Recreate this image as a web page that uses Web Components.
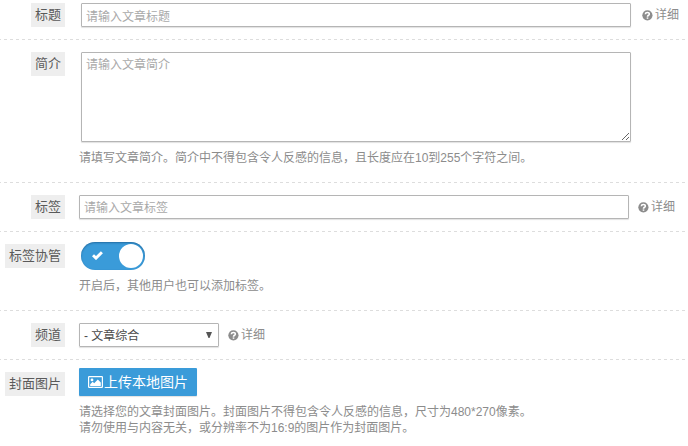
<!DOCTYPE html>
<html lang="zh-CN">
<head>
<meta charset="utf-8">
<title>发布文章</title>
<style>
    html, body{
        margin: 0;
        height: 446px;
        overflow: hidden;
        background: #fff;
    }
    body{
        font: 12px/16px "Liberation Sans", "Noto Sans CJK SC", sans-serif;
        color: #666;
    }
</style>
</head>
<body>
<article-form>
    <form-row label="标题" class="first">
        <text-field class="inset" hint="请输入文章标题"></text-field>
        <help-link class="wide">详细</help-link>
    </form-row>
    <form-row label="简介" style="--row-height: 143px">
        <text-field class="inset" multiline hint="请输入文章简介"></text-field>
        <p slot="note">请填写文章简介。简介中不得包含令人反感的信息，且长度应在10到255个字符之间。</p>
    </form-row>
    <form-row label="标签">
        <text-field hint="请输入文章标签"></text-field>
        <help-link>详细</help-link>
    </form-row>
    <form-row label="标签协管" style="--row-height: 79px; --row-top: 10px">
        <toggle-switch></toggle-switch>
        <p slot="note">开启后，其他用户也可以添加标签。</p>
    </form-row>
    <form-row label="频道">
        <select-box>- 文章综合</select-box>
        <help-link>详细</help-link>
    </form-row>
    <form-row label="封面图片" class="last" style="--row-height: 86px; --row-top: 8px">
        <upload-button>上传本地图片</upload-button>
        <p slot="note">请选择您的文章封面图片。封面图片不得包含令人反感的信息，尺寸为480*270像素。<br>请勿使用与内容无关，或分辨率不为16:9的图片作为封面图片。</p>
    </form-row>
</article-form>

<script>
class ArticleForm extends HTMLElement{
    constructor(){
        super();
        this.attachShadow({mode : 'open'});
        this.shadowRoot.innerHTML = `
            <style>
                :host{
                    display: flex;
                    flex-direction: column;
                    width: 685px;
                }
            </style>
            <slot></slot>
        `;
    }
}

const formRow = document.createElement('template');
formRow.innerHTML = `
    <style>
        :host{
            display: flex;
            align-items: flex-start;
            box-sizing: border-box;
            height: var(--row-height, 49px);
            padding-top: 12px;
            background: repeating-linear-gradient(90deg, #ddd 0 3px, transparent 3px 6px) -2px 100% / 690px 1px no-repeat;
        }
        :host(.first){
            height: 40px;
            padding-top: 3px;
        }
        :host(.last){
            background: none;
        }
        .label{
            display: flex;
            justify-content: flex-end;
            width: 65px;
            margin-right: 14px;
        }
        .label span{
            padding: 0 4px;
            background: #eee;
            color: #5a5a5a;
            font-size: 13px;
            line-height: 24px;
            white-space: nowrap;
        }
        .content{
            flex: 1;
            margin-top: calc(var(--row-top, 12px) - 12px);
        }
        .controls{
            display: flex;
            align-items: center;
        }
        ::slotted(p){
            margin: 8px 0 0;
            color: #8c8c8c;
            white-space: nowrap;
        }
    </style>
    <div class="label"><span></span></div>
    <div class="content">
        <div class="controls"><slot></slot></div>
        <slot name="note"></slot>
    </div>
`;

class FormRow extends HTMLElement{
    constructor(){
        super();
        this.attachShadow({mode : 'open'});
        this.shadowRoot.appendChild(formRow.content.cloneNode(true));
    }
    connectedCallback(){
        this.shadowRoot.querySelector('.label span').textContent = this.getAttribute('label');
    }
}

class TextField extends HTMLElement{
    constructor(){
        super();
        this.attachShadow({mode : 'open'});
    }
    connectedCallback(){
        const hint = this.getAttribute('hint');
        const field = this.hasAttribute('multiline')
            ? `<textarea placeholder="${hint}"></textarea>`
            : `<input type="text" placeholder="${hint}">`;
        this.shadowRoot.innerHTML = `
            <style>
                :host{
                    display: flex;
                }
                :host(.inset){
                    margin-left: 2px;
                }
                input, textarea{
                    box-sizing: border-box;
                    width: 550px;
                    height: 24px;
                    margin: 0;
                    padding: 4px 4px 2px;
                    border: 1px solid #b5b5b5;
                    border-radius: 1px;
                    box-shadow: 0 1px 1px rgba(0, 0, 0, .12);
                    background: #fff;
                    font: inherit;
                    color: #555;
                    outline: none;
                }
                :host(.inset) input{
                    padding: 5px 4px 1px;
                }
                textarea{
                    height: 90px;
                }
                ::placeholder{
                    color: #a9a9a9;
                }
            </style>
            ${field}
        `;
    }
}

class HelpLink extends HTMLElement{
    constructor(){
        super();
        this.attachShadow({mode : 'open'});
        this.shadowRoot.innerHTML = `
            <style>
                :host{
                    display: flex;
                    align-items: center;
                    gap: 2px;
                    margin-left: 9px;
                    color: #8c8c8c;
                }
                :host(.wide){
                    margin-left: 11px;
                }
                svg{
                    display: block;
                }
            </style>
            <svg width="11" height="11" viewBox="0 0 11 11">
                <circle cx="5.4" cy="5.3" r="5.1" fill="#8c8c8c"/>
                <path d="M3.3 4.2C3.5 1.9 7.5 2 7.3 4.2C7.2 5.4 5.5 5.2 5.5 6.7" fill="none" stroke="#fff" stroke-width="1.6"/>
                <rect x="4.7" y="7.4" width="1.6" height="1.4" fill="#fff"/>
            </svg>
            <slot></slot>
        `;
    }
}

class ToggleSwitch extends HTMLElement{
    constructor(){
        super();
        this.attachShadow({mode : 'open'});
        this.shadowRoot.innerHTML = `
            <style>
                :host{
                    display: flex;
                    align-items: center;
                    justify-content: space-between;
                    box-sizing: border-box;
                    width: 64px;
                    height: 28px;
                    margin-left: 2px;
                    padding: 0 2px 0 11px;
                    border-radius: 14px;
                    background: #3a9bd9;
                    box-shadow: inset 0 1px 2px rgba(0, 40, 80, .4);
                }
                svg{
                    margin-top: -1px;
                }
                .knob{
                    width: 24px;
                    height: 24px;
                    border-radius: 50%;
                    background: #fff;
                }
            </style>
            <svg width="11" height="9" viewBox="0 0 11 9">
                <path d="M1 4.2L4 7.1L9.9 1.3" fill="none" stroke="#fff" stroke-width="2.9"/>
            </svg>
            <div class="knob"></div>
        `;
    }
}

class SelectBox extends HTMLElement{
    constructor(){
        super();
        this.attachShadow({mode : 'open'});
        this.shadowRoot.innerHTML = `
            <style>
                :host{
                    display: flex;
                    align-items: center;
                    justify-content: space-between;
                    box-sizing: border-box;
                    width: 140px;
                    height: 24px;
                    padding: 0 6px 0 4px;
                    border: 1px solid #b5b5b5;
                    border-radius: 1px;
                    box-shadow: 0 1px 1px rgba(0, 0, 0, .12);
                    color: #4a4a4a;
                }
                span{
                    padding-top: 2px;
                }
            </style>
            <span><slot></slot></span>
            <svg width="6" height="6" viewBox="0 0 6 6">
                <path d="M0 0H6L3.5 6H2.5Z" fill="#555"/>
            </svg>
        `;
    }
}

class UploadButton extends HTMLElement{
    constructor(){
        super();
        this.attachShadow({mode : 'open'});
        this.shadowRoot.innerHTML = `
            <style>
                :host{
                    display: flex;
                    align-items: center;
                    box-sizing: border-box;
                    width: 118px;
                    height: 28px;
                    padding-left: 9px;
                    border-radius: 1px;
                    background: #3a9bd9;
                    box-shadow: 0 1px 1px rgba(0, 0, 0, .12);
                    color: #fff;
                    font-size: 14px;
                    white-space: nowrap;
                }
                svg{
                    margin-right: 1px;
                }
            </style>
            <svg width="15" height="12" viewBox="0 0 15 12">
                <rect x=".6" y=".6" width="13.8" height="10.8" rx=".6" fill="none" stroke="#fff" stroke-width="1.2"/>
                <circle cx="4" cy="3.9" r="1.4" fill="#fff"/>
                <path d="M2.2 10V8.2L4.7 5.8L6.2 7.2L9.8 3.4L12.8 6.5V10Z" fill="#fff"/>
            </svg>
            <slot></slot>
        `;
    }
}

window.customElements.define('article-form', ArticleForm);
window.customElements.define('form-row', FormRow);
window.customElements.define('text-field', TextField);
window.customElements.define('help-link', HelpLink);
window.customElements.define('toggle-switch', ToggleSwitch);
window.customElements.define('select-box', SelectBox);
window.customElements.define('upload-button', UploadButton);
</script>
</body>
</html>
